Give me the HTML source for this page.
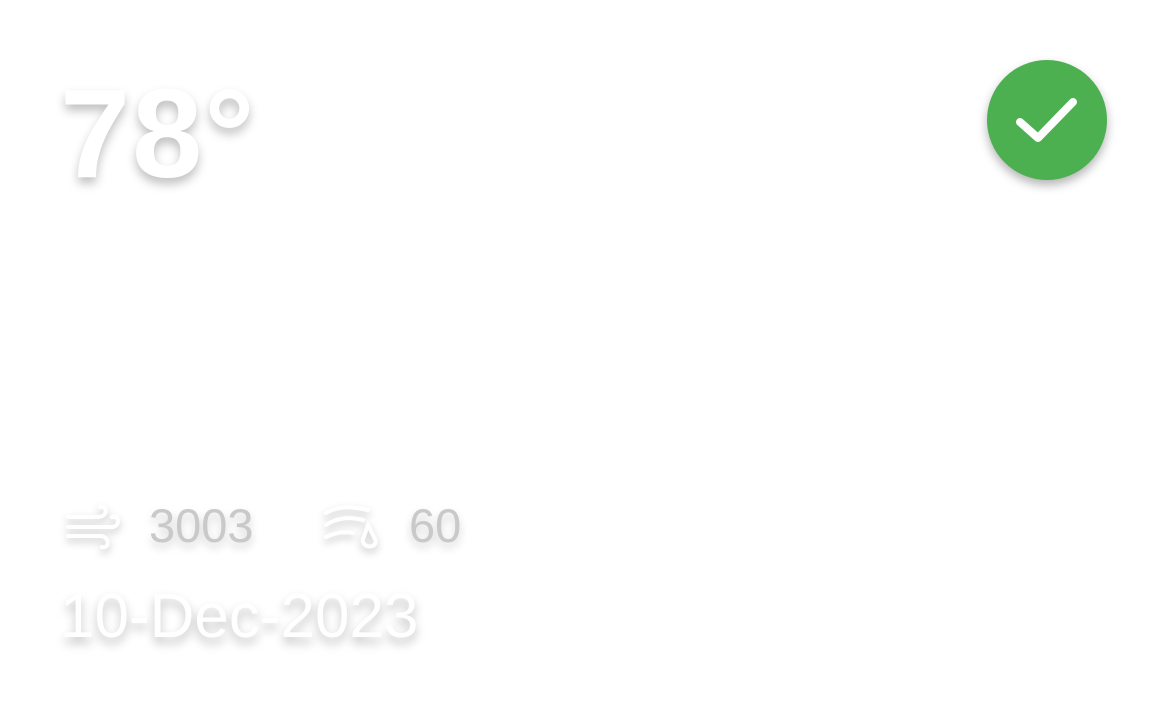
<!DOCTYPE html>
<html><head><style>
html,body{margin:0;width:1167px;height:711px;background:#fff;overflow:hidden;font-family:"Liberation Sans",sans-serif}
.t{position:absolute;left:60px;top:58px;font-size:126px;font-weight:bold;color:#fff;text-shadow:0 6px 10px rgba(0,0,0,.25);letter-spacing:2px;line-height:1.2}
.c{position:absolute;left:987px;top:60px;width:120px;height:120px;border-radius:50%;background:#4caf50;box-shadow:0 5px 10px rgba(0,0,0,.3)}
.n{position:absolute;top:500px;font-size:47px;color:#c9c9c9;text-shadow:0 5px 9px rgba(0,0,0,.18);line-height:52px}
.d{position:absolute;left:60px;top:582px;font-size:62px;color:#fff;text-shadow:0 6px 10px rgba(0,0,0,.25);line-height:70px}
svg.i{position:absolute;filter:drop-shadow(0 4px 4px rgba(0,0,0,.22))}
</style></head><body>
<div class="t">78°</div>
<div class="c"><svg width="120" height="120" viewBox="0 0 120 120"><path d="M33 62 L51 78 L86 42" fill="none" stroke="#fff" stroke-width="8" stroke-linecap="round" stroke-linejoin="round"/></svg></div>
<svg class="i" style="left:64px;top:503px" width="56" height="48" viewBox="0 0 56 48" fill="none" stroke="#fff" stroke-width="4" stroke-linecap="round"><path d="M4 14 H34 C44 14 44 2 36 4"/><path d="M4 24 H48 C56 24 56 12 48 14"/><path d="M4 33 H36 C46 33 46 46 38 44"/></svg>
<svg class="i" style="left:323px;top:503px" width="58" height="50" viewBox="0 0 58 50" fill="none" stroke="#fff" stroke-width="4" stroke-linecap="round"><path d="M3 10 C15 3 25 3 45 7"/><path d="M3 22 C15 14 27 14 40 17"/><path d="M3 34 C12 30 20 28 30 30"/><path d="M45 22 L52 36 C56 46 38 46 40 36 Z"/></svg>
<div class="n" style="left:149px">3003</div>
<div class="n" style="left:409px">60</div>
<div class="d">10-Dec-2023</div>
</body></html>
